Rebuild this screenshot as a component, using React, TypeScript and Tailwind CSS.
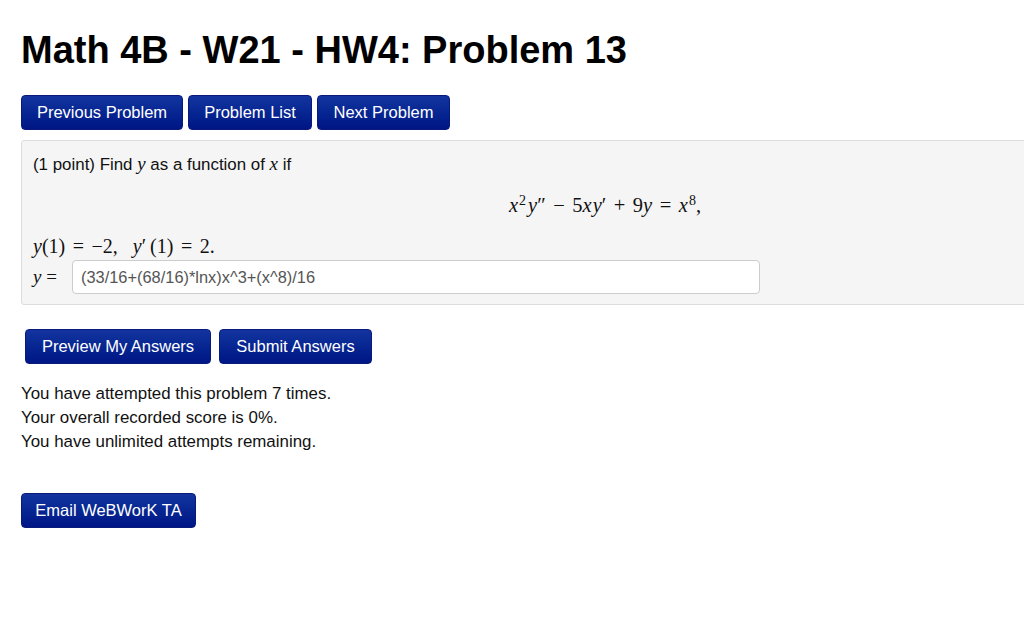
const sans = "font-['Liberation_Sans',Arial,sans-serif]";
const serif = "font-['Liberation_Serif','Times_New_Roman',serif]";

function NavButton({ label, className = "" }: { label: string; className?: string }) {
  return (
    <button
      className={`h-[35px] rounded-[4px] border border-[#0a1a7a] bg-gradient-to-b from-[#13349f] to-[#001585] text-white text-[16.5px] leading-none ${className}`}
    >
      {label}
    </button>
  );
}

function Op({ children, wide }: { children: React.ReactNode; wide?: boolean }) {
  return <span className={wide ? "mx-[7.5px]" : "mx-[6px]"}>{children}</span>;
}

export default function App() {
  return (
    <div className={`min-h-[641px] w-[1024px] overflow-hidden bg-white text-[#111] ${sans}`}>
      <div className="pl-[21px]">
        <h1 className="pt-[27px] text-[38px] font-bold leading-[46px] text-black">
          Math 4B - W21 - HW4: Problem 13
        </h1>

        <div className="mt-[22px] flex gap-[5px]">
          <NavButton label="Previous Problem" className="w-[162px]" />
          <NavButton label="Problem List" className="w-[124px]" />
          <NavButton label="Next Problem" className="w-[133px]" />
        </div>

        <div className="mt-[10px] w-[1168px] h-[165px] border border-[#dddddd] rounded-[3px] bg-[#f5f5f5] px-[11px] pt-[13px]">
          <p className="text-[16.9px] leading-[20px]">
            (1 point) Find <i className={`${serif} text-[19px]`}>y</i> as a function of{" "}
            <i className={`${serif} text-[19px]`}>x</i> if
          </p>

          <div className={`mt-[18px] text-center text-[20.5px] leading-[24px] ${serif}`}>
            <i>x</i>
            <sup className="text-[14px] ml-[1px] mr-[2px]">2</sup>
            <i>y</i>″<Op wide>−</Op>5<i>x</i>
            <i className="ml-[1px]">y</i>′<Op wide>+</Op>9<i>y</i>
            <Op wide>=</Op>
            <i>x</i>
            <sup className="text-[14px] ml-[1px]">8</sup>,
          </div>

          <div className={`mt-[17px] text-[20px] leading-[24px] ${serif}`}>
            <i>y</i>(1)<Op wide>=</Op>−2,&nbsp;&nbsp;&nbsp;<i>y</i>′&thinsp;(1)<Op wide>=</Op>2.
          </div>

          <div className="mt-[2px] flex items-center">
            <span className={`w-[39px] text-[19px] ${serif}`}>
              <i>y</i> =
            </span>
            <div className="w-[688px] h-[34px] rounded-[4px] border border-[#cccccc] bg-white pl-[8px] flex items-center text-[16.4px] text-[#555]">
              (33/16+(68/16)*lnx)x^3+(x^8)/16
            </div>
          </div>
        </div>

        <div className="mt-[24px] ml-[4px] flex gap-[8px]">
          <NavButton label="Preview My Answers" className="w-[186px]" />
          <NavButton label="Submit Answers" className="w-[153px]" />
        </div>

        <div className="mt-[18px] text-[16.9px] leading-[24px]">
          <p>You have attempted this problem 7 times.</p>
          <p>Your overall recorded score is 0%.</p>
          <p>You have unlimited attempts remaining.</p>
        </div>

        <div className="mt-[39px]">
          <NavButton label="Email WeBWorK TA" className="w-[175px]" />
        </div>
      </div>
    </div>
  );
}
